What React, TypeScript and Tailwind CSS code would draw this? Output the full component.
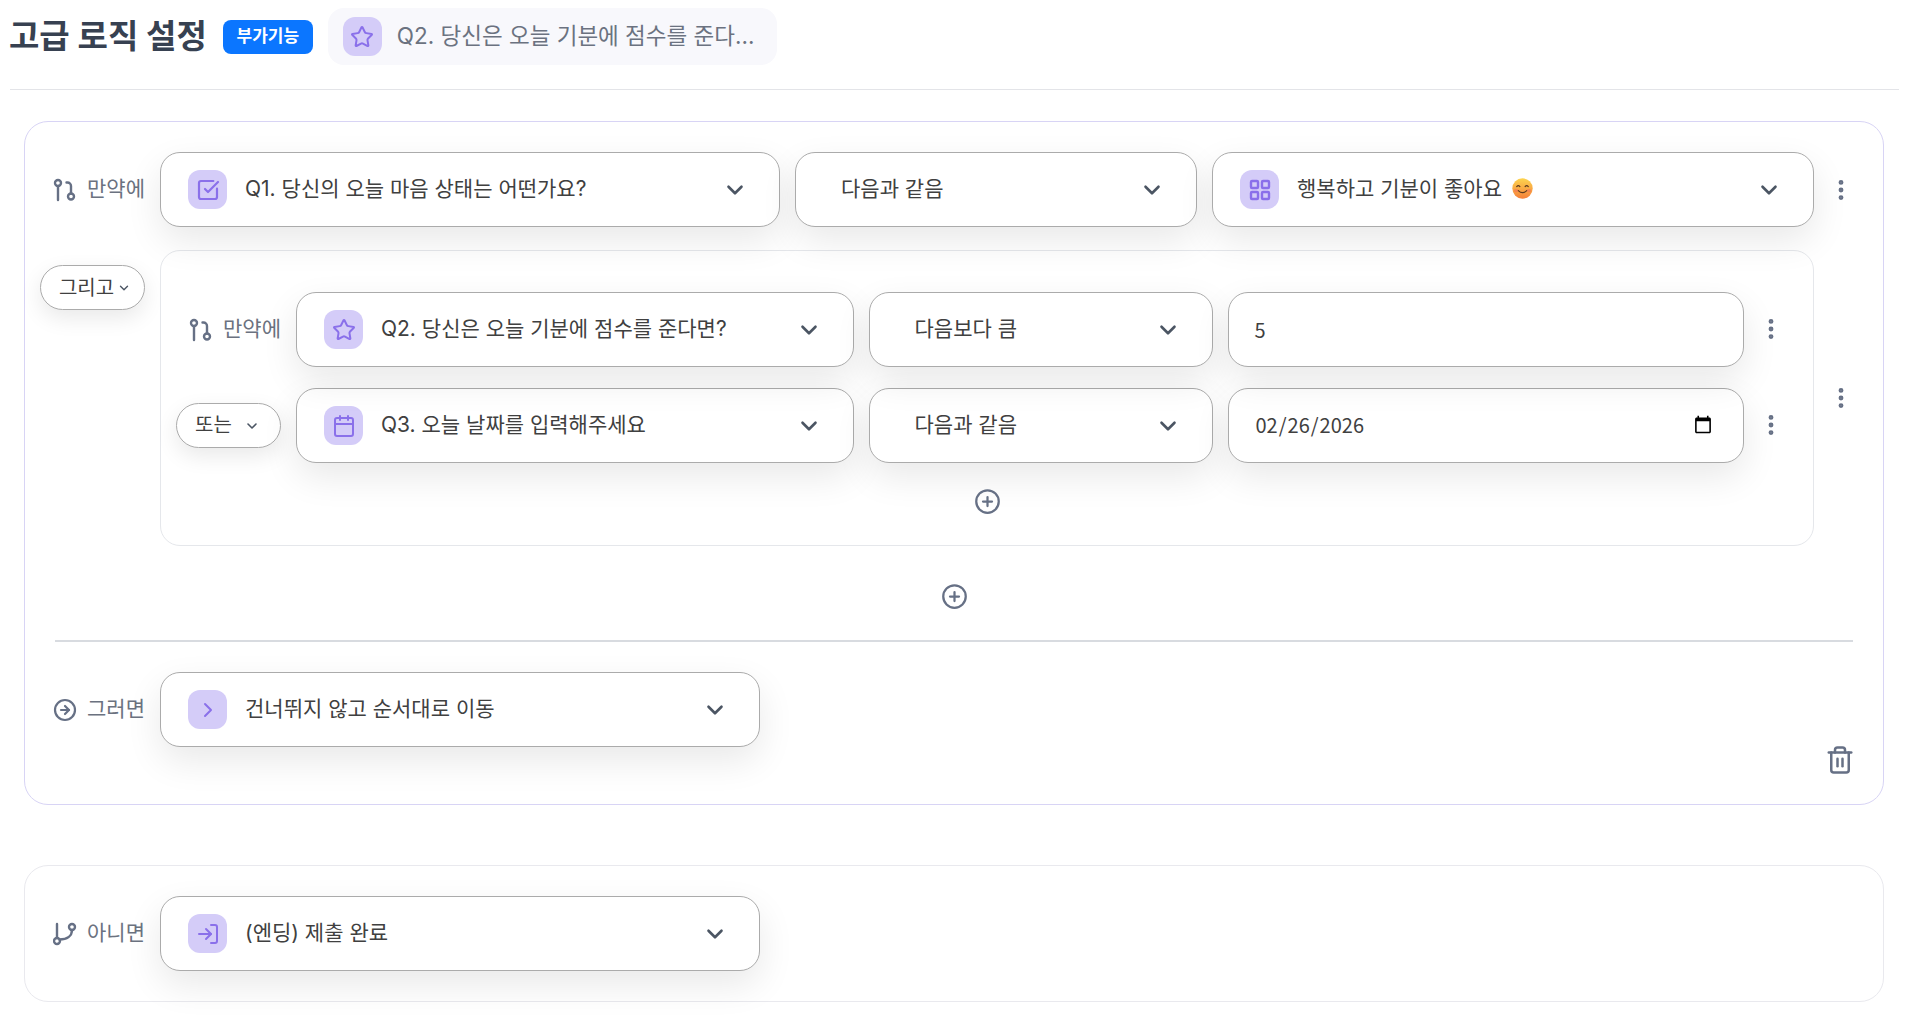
import { Star, Calendar, SquareCheckBig, LayoutGrid, ChevronRight, ChevronDown, EllipsisVertical, CirclePlus, CircleArrowRight, Trash2, LogIn } from "lucide-react";
import type { ReactNode } from "react";

const FONT = "font-['Inter','Noto_Sans_CJK_KR',sans-serif]";

function IfIcon() {
  return (
    <svg width="24" height="24" viewBox="0 0 24 24" fill="none" stroke="currentColor" strokeWidth="2.4" strokeLinecap="round" strokeLinejoin="round">
      <circle cx="5" cy="5" r="3" />
      <path d="M5 8v14" />
      <circle cx="18" cy="18.5" r="3" />
      <path d="M18 15.5V8a3.5 3.5 0 0 0-3.5-3.5h-1" />
    </svg>
  );
}

function ElseIcon() {
  return (
    <svg width="24" height="24" viewBox="0 0 24 24" fill="none" stroke="currentColor" strokeWidth="2.4" strokeLinecap="round" strokeLinejoin="round">
      <path d="M4 2v14" />
      <circle cx="4" cy="19" r="3" />
      <circle cx="19" cy="5" r="3" />
      <path d="M19 8c0 6-5 9.5-12.5 9.5" />
    </svg>
  );
}

function Emoji() {
  return (
    <svg width="21" height="21" viewBox="0 0 20 20" className="shrink-0">
      <defs>
        <linearGradient id="em" x1="0" y1="0" x2="0" y2="1">
          <stop offset="0" stopColor="#fdd44e" />
          <stop offset="1" stopColor="#f5803a" />
        </linearGradient>
      </defs>
      <circle cx="10" cy="10" r="9.7" fill="url(#em)" />
      <ellipse cx="4" cy="12" rx="2.4" ry="1.6" fill="#f4735a" opacity="0.6" />
      <ellipse cx="16" cy="12" rx="2.4" ry="1.6" fill="#f4735a" opacity="0.6" />
      <path d="M4.5 8.2q1.5-2 3 0M12.5 8.2q1.5-2 3 0" fill="none" stroke="#5b3a1e" strokeWidth="1.1" strokeLinecap="round" />
      <path d="M6 12q4 4 8 0" fill="none" stroke="#5b3a1e" strokeWidth="1.1" strokeLinecap="round" />
    </svg>
  );
}

function IconTile({ children }: { children: ReactNode }) {
  return (
    <span className="flex h-[39px] w-[39px] shrink-0 items-center justify-center rounded-xl bg-[#d4ccf8] text-[#8a70ea]">
      {children}
    </span>
  );
}

const SHADOW = "shadow-[0_14px_36px_rgba(0,0,0,0.09)]";

function Select({ width, icon, children, left, chevronRight = 32 }: { width: string; icon?: ReactNode; children: ReactNode; left: string; chevronRight?: number }) {
  return (
    <div className={`flex h-[75px] shrink-0 items-center justify-between rounded-[20px] border border-[#ababab] bg-white ${SHADOW} ${width} ${left}`} style={{ paddingRight: chevronRight - 1 }}>
      <span className="flex min-w-0 items-center gap-[18px] text-[21px] text-[#404040]">
        {icon}
        <span className="-mt-[2px]">{children}</span>
      </span>
      <ChevronDown size={26} strokeWidth={2.4} className="text-[#4b5563]" />
    </div>
  );
}

function Label({ icon, text, pad }: { icon: ReactNode; text: string; pad: string }) {
  return (
    <div className={`flex h-[75px] items-center ${pad} gap-[10px] text-[21px] text-[#6b7280]`}>
      <span className="flex w-[24px] shrink-0 items-center justify-center text-[#667085]">{icon}</span>
      <span className="-mt-[2px] whitespace-nowrap">{text}</span>
    </div>
  );
}

function Dots() {
  return <EllipsisVertical size={26} strokeWidth={2.5} className="shrink-0 text-[#667085]" />;
}

const PLUS = "text-[#667085]";

export default function App() {
  return (
    <div className={`min-h-[1026px] bg-white pt-2 pb-6 ${FONT}`}>
      <header className="ml-[10px] mr-[12px] flex items-center border-b border-[#e3e4e8] pb-6">
        <h1 className="-ml-px text-[33px] leading-none font-bold text-[#374151]">고급 로직 설정</h1>
        <span className="ml-4 flex h-[34px] w-[90px] items-center justify-center rounded-lg bg-[#0b76ff] text-[17px] font-bold text-white">부가기능</span>
        <div className="ml-[15px] flex h-[57px] w-[449px] items-center gap-[15px] rounded-2xl bg-[#f8f8fc] pl-[15px]">
          <IconTile><Star size={24} /></IconTile>
          <span className="-mt-[2px] text-[22.5px] whitespace-nowrap text-[#6b7280]">Q2. 당신은 오늘 기분에 점수를 준다...</span>
        </div>
      </header>

      <section className="mt-[31px] ml-[24px] flex w-[1860px] flex-col rounded-[24px] border border-[#d8d4f5] pt-[30px]">
        <div className="relative z-10 flex">
          <div className="w-[135px]"><Label icon={<IfIcon />} text="만약에" pad="pl-[28px]" /></div>
          <div className="flex gap-[15px]">
            <Select width="w-[620px]" left="pl-[27px]" icon={<IconTile><SquareCheckBig size={24} strokeWidth={2.2} /></IconTile>}>Q1. 당신의 오늘 마음 상태는 어떤가요?</Select>
            <Select width="w-[402px]" left="pl-[45px]">다음과 같음</Select>
            <Select width="w-[602px]" left="pl-[27px]" icon={<IconTile><LayoutGrid size={24} strokeWidth={2.4} /></IconTile>}>
              <span className="flex items-center gap-[10px]">행복하고 기분이 좋아요 <Emoji /></span>
            </Select>
          </div>
          <div className="ml-[14px] flex items-center"><Dots /></div>
        </div>

        <div className="mt-[23px] flex">
          <div className="w-[135px] pt-[15px] pl-[15px]">
            <button className="flex h-[45px] w-[105px] items-center justify-center gap-[3px] rounded-full border border-[#ababab] bg-white pl-[5px] text-[20px] text-[#404040] shadow-[0_8px_22px_rgba(0,0,0,0.09)]">
              그리고<ChevronDown size={14} strokeWidth={2.4} className="text-[#4b5563]" />
            </button>
          </div>
          <div className="w-[1654px] rounded-[20px] border border-[#e5e7eb] pt-[41px] pb-[30px]">
            <div className="relative z-10 flex">
              <div className="w-[135px]"><Label icon={<IfIcon />} text="만약에" pad="pl-[28px]" /></div>
              <div className="flex gap-[15px]">
                <Select width="w-[557.5px]" left="pl-[27px]" icon={<IconTile><Star size={24} /></IconTile>}>Q2. 당신은 오늘 기분에 점수를 준다면?</Select>
                <Select width="w-[344px]" left="pl-[45px]">다음보다 큼</Select>
                <div className={`flex h-[75px] w-[516px] shrink-0 items-center rounded-[20px] border border-[#ababab] bg-white pl-[26px] font-['Noto_Sans_CJK_KR'] text-[20px] text-[#404040] ${SHADOW}`}>5</div>
              </div>
              <div className="ml-[14px] -mt-[2px] flex items-center"><Dots /></div>
            </div>
            <div className="mt-[21px] flex">
              <div className="flex h-[75px] w-[135px] items-center pl-[15px]">
                <button className="flex h-[45px] w-[105px] items-center justify-center gap-[12px] rounded-full border border-[#ababab] bg-white pr-[2px] text-[20px] text-[#404040] shadow-[0_8px_22px_rgba(0,0,0,0.09)]">
                  <span className="-mt-[2px]">또는</span><ChevronDown size={16} strokeWidth={2.4} className="text-[#4b5563]" />
                </button>
              </div>
              <div className="flex gap-[15px]">
                <Select width="w-[557.5px]" left="pl-[27px]" icon={<IconTile><Calendar size={24} /></IconTile>}>Q3. 오늘 날짜를 입력해주세요</Select>
                <Select width="w-[344px]" left="pl-[45px]">다음과 같음</Select>
                <div className={`flex h-[75px] w-[516px] shrink-0 items-center rounded-[20px] border border-[#ababab] bg-white pr-[28px] pl-[26px] text-[#404040] ${SHADOW}`}>
                  <input type="date" defaultValue="2026-02-26" className="-mt-[2px] w-full bg-transparent font-['Noto_Sans_CJK_KR'] text-[20px] outline-none" />
                </div>
              </div>
              <div className="ml-[14px] -mt-[2px] flex items-center"><Dots /></div>
            </div>
            <div className="mt-[25px] flex justify-center"><CirclePlus size={27} strokeWidth={2} className={PLUS} /></div>
          </div>
          <div className="ml-[14px] flex items-center"><Dots /></div>
        </div>

        <div className="mt-[37px] flex justify-center"><CirclePlus size={27} strokeWidth={2} className={PLUS} /></div>

        <div className="mx-[30px] mt-[30px] h-[2px] bg-[#d8dbe0]" />

        <div className="mt-[30px] flex items-start pb-[29px]">
          <div className="w-[135px]"><Label icon={<CircleArrowRight size={28} strokeWidth={2.2} />} text="그러면" pad="pl-[28px]" /></div>
          <Select width="w-[600px]" left="pl-[27px]" icon={<IconTile><ChevronRight size={24} strokeWidth={2} /></IconTile>}>건너뛰지 않고 순서대로 이동</Select>
          <div className="mt-[73px] mr-[28px] ml-auto"><Trash2 size={30} strokeWidth={2} className="text-[#667085]" /></div>
        </div>
      </section>

      <section className="mt-[60px] ml-[24px] flex w-[1860px] rounded-[24px] border border-[#e9e9ee] pt-[30px] pb-[30px]">
        <div className="w-[135px]"><Label icon={<ElseIcon />} text="아니면" pad="pl-[28px]" /></div>
        <Select width="w-[600px]" left="pl-[27px]" icon={<IconTile><LogIn size={24} strokeWidth={2} /></IconTile>}>(엔딩) 제출 완료</Select>
      </section>
    </div>
  );
}
